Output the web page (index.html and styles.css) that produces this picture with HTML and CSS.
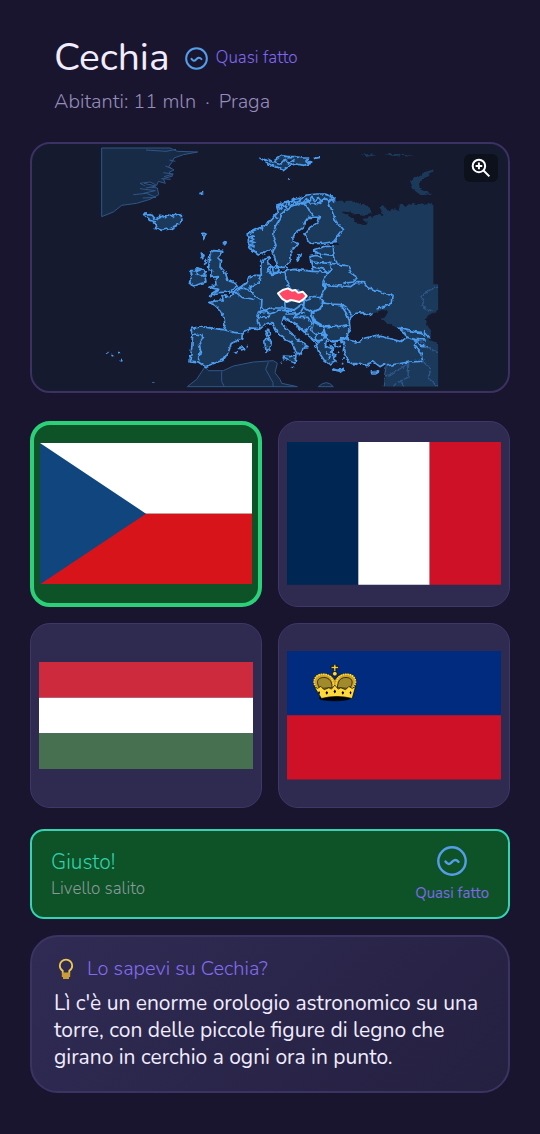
FILE: index.html
```html
<!DOCTYPE html>
<html lang="it">
<head>
    <meta charset="UTF-8">
    <meta name="viewport" content="width=device-width, initial-scale=1.0">
    <title>Cechia</title>
    <link rel="stylesheet" href="styles.css">
</head>
<body>
    <main class="page">
        <header class="country">
            <div class="country-title">
                <h1>Cechia</h1>
                <svg class="level-icon" viewBox="0 0 30 30" aria-hidden="true">
                    <circle cx="15" cy="15" r="13.5"/>
                    <path d="M8.500 15.500c2 3 3.700 3.200 6 .8s4.200-3.400 7-.5"/>
                </svg>
                <span class="level-name">Quasi fatto</span>
            </div>
            <p class="country-facts"><span>Abitanti: 11 mln</span><span>·</span><span>Praga</span></p>
        </header>

        <section class="map-card">
            <svg class="map" viewBox="0 0 1020 729" role="img" aria-label="Europa">
                <defs>
                    <!-- roughens the coastlines and borders -->
                    <filter id="coast" filterUnits="userSpaceOnUse" x="0" y="0" width="1040" height="740" color-interpolation-filters="sRGB">
                        <feTurbulence type="fractalNoise" baseFrequency="0.07" numOctaves="2" seed="4"/>
                        <feDisplacementMap in="SourceGraphic" scale="13" xChannelSelector="R" yChannelSelector="G"/>
                    </filter>
                    <clipPath id="frame">
                        <path d="M0 0H1000V415H1015V722H0Z"/>
                    </clipPath>
                </defs>

                <!-- countries outside the quiz -->
                <g class="far">
                    <path d="M5 6H210L232 16 293 18 250 26 222 36 215 50 206 62 222 72 208 78 218 90 190 98 196 112 175 106 170 118 150 108 120 112 140 122 172 126 176 146 150 160 110 172 65 178 40 198 5 212Z"/>
                    <path d="M138 12l60 4 30-6M132 112l36 8-30 6M100 146l40-4 28 12-40 2M190 80l30 4-28 8M184 98l28 2M196 60l20 8M208 42l18 4M120 128l46 6-36 8"/>
                    <path d="M262 722L290 700 315 662 325 674 370 674 400 660 460 648 520 644 532 652 525 680 540 700 545 712 592 722Z"/>
                    <path d="M365 676v30l8 16M505 648l-8 22 22 40v12"/>
                    <path d="M655 722q25-24 45 0Z"/>
                </g>

                <g clip-path="url(#frame)">
                <g filter="url(#coast)">
                    <!-- land -->
                    <g class="land">
                        <path d="M445 262L485 242 515 222 535 197 530 182 555 167 590 162 620 147 650 144 675 144 700 152 705 164 720 167 765 167 810 187 815 202 790 210 740 197 722 197 755 214 765 232 795 237 800 227 788 220 815 212 830 204 850 207 838 182 852 177 862 194 885 187 895 194 900 177 920 182 935 170 960 177 985 170 1000 177 1030 177V484L1010 496 995 502 973 522 985 542 993 562 990 582 1010 590 1030 620V740H851L857 687 860 652 840 662 820 647 800 659 780 649 765 657 745 647 737 632 730 612 735 592 725 584 700 588 680 584 676 600 700 612 698 632 706 646 690 654 672 642 656 618 648 594 635 578 612 556 580 532 556 518 552 508 545 536 575 562 590 580 624 602 610 604 605 620 595 628 588 616 575 590 550 576 530 556 517 530 502 532 480 548 455 546 430 560 424 578 395 592 385 618 370 642 335 655 315 662 295 648 270 645 275 607 278 567 272 548 305 542 370 551 375 537 372 515 360 492 345 478 328 470 348 462 370 462 365 449 390 452 405 437 415 427 440 412 445 396 465 388 484 388 482 357 490 337 508 332 505 352 515 362 502 376 515 385 560 374 585 370 640 376 634 358 630 332 648 328 665 336 660 322 644 318 638 312 670 302 700 297 720 294 710 286 670 292 632 292 620 285 615 262 630 244 655 227 658 214 625 214 615 227 610 244 585 262 578 277 580 287 595 294 585 307 572 317 573 342 555 364 530 364 525 337 515 317 510 308 495 320 475 327 455 312 445 292Z"/>
                        <path d="M975 78l27-8v8l-30 16-15 20 2 12 38 18-35 4-22-18-10-26z"/>
                        <path d="M782 26l22 6 25-4-24-4zM852 24l30 6 30-2 32 2-30-6z"/>
                    </g>

                    <!-- inland seas -->
                    <path class="sea" d="M768 502L790 500 805 508 820 504 836 496 850 492 865 496 855 514 842 520 862 530 890 545 915 562 918 574 900 586 862 576 830 568 795 576 770 588 745 582 742 566 750 548 748 528 752 514Z"/>

                    <g class="lines">
                        <!-- islands -->
                        <path class="isle" d="M130 205l22-2 14 16 16-8 12 4 14-8 10 4 12-6 14 4 2 14-12 14-20 10-28 6-20-6 6-10-14-4 8-6-14-4z"/>
                        <path class="isle" d="M298 143l12-3M306 262l14 0-6 8-2 8zM370 290l8-4-4 10z"/>
                        <path class="isle" d="M480 36l14 8 12-4 12 8 16-12 10-8 18 4 24 0 20 4 20 0-8 8 14 8-20 6-24-4-18 4-20 16-16-10-20-6zM520 46l24 8 12-14 10 12 18-12M624 46l10 2M640 38l20-4M564 98l6 2"/>
                        <path class="isle" d="M330 322l10-8 28 2-4 10-10 10 8 8-2 18 10 10 8 14 6 18 20 6 8 12-16 12 4 4-50 2-18 12 4-10 20-12-12-2-14-4 18-8-2-16 6-8-18 2 4-18-10-2-2-10z"/>
                        <path class="isle" d="M308 370l10 8-4 8 4 22-20 6-14 6-16-8 6-12-4-10 8-8-6-8 14 0 6-8z"/>
                        <path d="M308 370l-18 4-2 10 14 6 12-4"/>
                        <path class="isle" d="M304 324l8 4-4 10zM314 342l6 8-8 6M372 289l6-4-4 10"/>
                        <path class="isle" d="M502 552l4-2 2 14-6 10-4-10zM494 582l14-4 6 10-4 24-12 4zM550 630l22 2 16-6-2 18-2 8-18-8-16-8z"/>
                        <path class="isle" d="M518 362l12-4 6 8-4 14-12 0zM506 372l8 6M594 328l10-4-4 12-8 6zM558 366l6 2M640 312l6 4-8 2zM644 322l6-4 4 6"/>
                        <path class="isle" d="M404 618l8-2M418 606l10-4 6 6-10 4zM440 602l4 0M696 668l14 4 20-2-10 6-22-4zM814 678l16-2 6 2-10 6-10 0zM726 640l6-2M714 618l6 2M716 600l6 2M726 654l4-2M546 648l2 2M576 662l2 4"/>
                        <path class="isle" d="M18 622l8-2M34 628l6 2M60 642l4 4M160 712l6-2M54 620l4 0"/>

                        <!-- mainland coast -->
                        <path d="M705 164L700 152 675 144 650 144 620 147 590 162 555 167 530 182 535 197 515 222 485 242 445 262 445 292 455 312 475 327 495 320 510 308 515 317 525 337 530 364 555 364 573 342 572 317 585 307 595 294 580 287 578 277 585 262 610 244 615 227 625 214 658 214 655 227 630 244 615 262 620 285 632 292 670 292 710 286"/>
                        <path d="M702 300L670 302 638 312 644 318 660 322 665 336 648 328 630 332 634 358 640 376 585 370 560 374 515 385 502 376 515 362 505 352 508 332 490 337 482 357 484 388 465 388 445 396 440 412 415 427 405 437 390 452 365 449 370 462 348 462 328 470 345 478 360 492 372 515 375 537 370 551 305 542 272 548 278 567 275 607 270 645 295 648 315 662 335 655 370 642 385 618 395 592 424 578 430 560 455 546 480 548 502 532 517 530 530 556 550 576 575 590 588 616 595 628 605 620 610 604 624 602 590 580 575 562 545 536 552 508 556 518 580 532 612 556 635 578 648 594 656 618 672 642 690 654 706 646 698 632 700 612 676 600 680 584 700 588 725 584 735 592 730 612 737 632 745 647 765 657 780 649 800 659 820 647 840 662 860 650"/>
                        <path d="M820 504L805 508 790 500 768 502 752 514 748 528 750 548 742 566 745 582 770 588 795 576 830 568 862 576 900 586 918 574 915 562 895 546"/>

                        <!-- fjords and northern capes -->
                        <path d="M448 262l14 8-14 4 16 6-14 6 18 4-18 6 14 8M485 242l6 12M505 226l-6 14M520 208l12 10M530 182l16 8-4-18 16 12 6-18 8 14 12-14 6 10 12-16 4 14 14-16 4 12 12-16 10 12 8-12 10 12 10-10 10 12 10-12 8 14M528 178l22-8 24-6 14-10"/>

                        <!-- borders -->
                        <path d="M518 322L528 298 520 276 524 244 540 218 548 200 570 184 600 172 616 174 626 190 640 208M600 172L640 170 648 176 668 162 684 164M684 164L692 184 700 206 708 226 728 252 712 272 700 288"/>
                        <path d="M700 302l2 26-38-4M702 328l10 26-24-2-54-4M712 354l20 4M634 362l40 8 10 14M640 376l40 2M692 358l4 14-16 12-12 26M712 354l32 6 10 22 18 12-12 14-30 4M668 410l10 14-18 30 2 8M676 416l54 4 22 2 16-12 22 0 12 14 50 18 24 6-2 24-24 10-20 8"/>
                        <path d="M556 374l2 30 10 18 8 22M484 390l-10 22-24 10 6 20 12 6M415 427l18 0 28 14M424 422l18-16M405 437l22 18 28 4 8 4M462 448l24 14-2 22-8 16-4 26 8 20M472 500l26-4 18-10 40 0-2-16 18-6"/>
                        <path d="M480 484l20 10 8 10 14-4 14-8 20 2 26 2 10 12M480 512l18 4 12-10M556 486l26 6 26-18 4-20M612 462l28-10 28 0M614 462l-4 22 24 14 30-10 8-18-10-10M610 484l-8 14-24 6-22 0M572 434l30-2"/>
                        <path d="M662 470l30 4 30 2 16 24 10 24M722 474l20 14 12 20M672 470l-14 20-24 12M634 500l10 24 30 18 40 0 32-6M614 500l-14 2-24 12M578 514l46 0 10 16-8 18-14 10-30-30M634 502l6 28-6 26M640 528l30 14 8 30-18 12-24-4M670 544l4 28 28 14 28-6 14-12M634 556l12 10 8 22-10 12M646 566l18-8 10 14"/>
                        <path d="M278 564l28 2 2 14-10 14 4 22-6 20 0 10M372 551l30 8 28 4M430 560l10-8M724 592l-2-14 20-2"/>
                        <path d="M895 546l30 8 40 6 14 14M918 574l30 6 30 2M948 580l-6 16 20 24 6 26M968 646l-40 2-40 6-28 6M948 582l14 16 22 2M972 556l18 20"/>
                        <!-- aegean -->
                        <path d="M690 600l12 10-8 8 14 8-10 8 12 10M676 616l14 12-6 12M708 590l-4 10 12 6"/>
                    </g>

                    <path class="far-lines" d="M860 652l-6 36-4 34M854 690l16-4 60-36M926 654l-2 40-34 16-10 12M900 708l12 14M968 646l24 22-6 30 30 24M1015 420l-20 8-20 14-12 10 10 12-8 16 30 16M964 586l20 20 30 14"/>
                </g>
                </g>

                <path class="current" d="M534 442l14-10 16-5 12 7 10-2 8 8 14-3 12 13-10 10-12 8-14-4-12-2-12 5-14-9z"/>
            </svg>
            <button class="zoom-button" type="button" aria-label="Ingrandisci">
                <svg viewBox="0 0 24 24" aria-hidden="true">
                    <circle cx="9.500" cy="9.500" r="7.500"/>
                    <path d="M15 15l7 7M9.500 5.500v8M5.500 9.500h8"/>
                </svg>
            </button>
        </section>

        <section class="flags">
            <button class="flag correct" type="button" aria-label="Cechia">
                <svg viewBox="0 0 6 4">
                    <path fill="#fff" d="M0 0h6v2H0z"/>
                    <path fill="#d7141a" d="M0 2h6v2H0z"/>
                    <path fill="#11457e" d="M0 0l3 2-3 2z"/>
                </svg>
            </button>
            <button class="flag" type="button" aria-label="Francia">
                <svg viewBox="0 0 6 4">
                    <path fill="#002654" d="M0 0h2v4H0z"/>
                    <path fill="#fff" d="M2 0h2v4H2z"/>
                    <path fill="#ce1126" d="M4 0h2v4H4z"/>
                </svg>
            </button>
            <button class="flag" type="button" aria-label="Ungheria">
                <svg viewBox="0 0 6 3">
                    <path fill="#cd2a3e" d="M0 0h6v1H0z"/>
                    <path fill="#fff" d="M0 1h6v1H0z"/>
                    <path fill="#477050" d="M0 2h6v1H0z"/>
                </svg>
            </button>
            <button class="flag" type="button" aria-label="Liechtenstein">
                <svg viewBox="0 0 640 384">
                    <path fill="#002b7f" d="M0 0h640v192H0z"/>
                    <path fill="#ce1126" d="M0 192h640v192H0z"/>
                    <g transform="translate(39 0)" stroke="#000" stroke-width="2">
                        <ellipse cx="104" cy="141" rx="46" ry="8"/>
                        <path fill="#c9a227" d="M54 118C28 88 46 64 76 68c14 2 22 8 28 18 6-10 14-16 28-18 30-4 48 20 22 50z"/>
                        <path fill="#a08a2c" d="M60 112C42 88 58 76 78 80c14 4 18 16 18 30zM148 112c18-24 2-36-18-32-14 4-18 16-18 30z"/>
                        <path fill="none" stroke="#ffd83d" stroke-width="5" stroke-dasharray="5 2" d="M52 114C30 88 48 66 76 70c16 2 24 16 24 38M156 114c22-26 4-48-24-44-16 2-24 16-24 38"/>
                        <path fill="#ffd83d" d="M101 40h6v6h8v6h-8v10h-6V52h-8v-6h8z"/>
                        <circle cx="104" cy="68" r="7" fill="#ffd83d"/>
                        <path fill="#ffd83d" d="M42 106l10 6 10-6 10 10 14-6 8 4 10-12 10 12 8-4 14 6 10-10 10 6 10-6-10 36q-46-12-92 0z"/>
                        <path stroke="none" d="M57 120l3 5-3 5-3-5zM80 120l4 5-4 6-4-6zM104 115l4 6-4 6-4-6zM128 120l4 5-4 6-4-6zM151 120l3 5-3 5-3-5z"/>
                    </g>
                </svg>
            </button>
        </section>

        <section class="result">
            <div class="result-text">
                <strong>Giusto!</strong>
                <span>Livello salito</span>
            </div>
            <div class="result-level">
                <svg class="level-icon" viewBox="0 0 30 30" aria-hidden="true">
                    <circle cx="15" cy="15" r="13.700"/>
                    <path d="M8.500 15.500c2 3 3.700 3.200 6 .8s4.200-3.400 7-.5"/>
                </svg>
                <span class="level-name">Quasi fatto</span>
            </div>
        </section>

        <section class="trivia">
            <h2>
                <svg viewBox="0 0 24 24" aria-hidden="true">
                    <path fill="none" stroke="#f0c850" stroke-width="1.800" d="M8.700 16v-2.200C6.800 12.700 5.800 11 5.800 8.800a6.200 6.200 0 0 1 12.400 0c0 2.200-1 3.900-2.900 5V16"/>
                    <path fill="#c99d35" d="M7.800 15.500h8.400v4.500h-1.200v2H9v-2H7.800z"/>
                </svg>
                Lo sapevi su Cechia?
            </h2>
            <p>Lì c'è un enorme orologio astronomico su una torre, con delle piccole figure di legno che girano in cerchio a ogni ora in punto.</p>
        </section>
    </main>
</body>
</html>
```
FILE: styles.css
```css
* {
    box-sizing: border-box;
}

body {
    margin: 0;
    background: #19152f;
    color: #f1ecff;
    font-family: "Nunito", "Open Sans", sans-serif;
    font-size: 20px;
    font-weight: 300;
}

h1, h2, p {
    margin: 0;
    font-weight: 300;
}

svg {
    display: block;
}

button {
    border: none;
    cursor: pointer;
}

.page {
    padding: 32px 30px 40px;
}

/* header */
.country {
    padding: 0 24px;
    margin-bottom: 26px;
}

.country-title {
    display: flex;
    align-items: center;
    gap: 8px;
}

.country-title h1 {
    margin-right: 7px;
    font-size: 39px;
    font-weight: 400;
    line-height: 52px;
}

.level-icon {
    width: 23px;
    height: 23px;
    fill: none;
    stroke: #549ee9;
    stroke-width: 2.6;
    stroke-linecap: round;
}

.level-name {
    color: #7f69ea;
    font-size: 17px;
    line-height: 20px;
}

.country-facts {
    display: flex;
    gap: 9px;
    margin-top: 4px;
    color: #968dba;
    font-size: 20px;
    line-height: 28px;
}

/* map */
.map-card {
    position: relative;
    padding: 2px 68px;
    margin-bottom: 28px;
    border: 2px solid #3b3162;
    border-radius: 20px;
    background: #151a2e;
}

.map {
    width: 100%;
}

.far {
    fill: #182b46;
    stroke: #2f5688;
    stroke-width: 3;
}

.far-lines {
    fill: none;
    stroke: #2f5688;
    stroke-width: 4;
}

.land {
    fill: #1b3a5b;
}

.sea {
    fill: #151a2e;
}

.lines {
    fill: none;
    stroke: #4c9cf0;
    stroke-width: 5;
    stroke-linejoin: round;
}

.isle {
    fill: #1b3a5b;
}

.current {
    fill: #ff4766;
    stroke: #fff;
    stroke-width: 6;
    stroke-linejoin: round;
}

.zoom-button {
    position: absolute;
    top: 10px;
    right: 10px;
    padding: 4px 7px;
    border-radius: 6px;
    background: #0c111c;
}

.zoom-button svg {
    width: 20px;
    height: 20px;
    fill: none;
    stroke: #fff;
    stroke-width: 2.4;
}

/* answers */
.flags {
    display: grid;
    grid-template-columns: 1fr 1fr;
    gap: 16px;
    margin-bottom: 21px;
}

.flag {
    display: flex;
    align-items: center;
    aspect-ratio: 5 / 4;
    padding: 8px;
    border: 1px solid #3f3768;
    border-radius: 20px;
    background: #2f2a50;
}

.flag svg {
    width: 100%;
}

.flag.correct {
    padding: 6px;
    border: 4px solid #2bd079;
    background: #0e5227;
}

.result {
    display: flex;
    justify-content: space-between;
    align-items: center;
    padding: 15px 19px 14px;
    margin-bottom: 16px;
    border: 2px solid #35d3b4;
    border-radius: 14px;
    background: #0e5227;
}

.result-text {
    display: flex;
    flex-direction: column;
    color: #8a9a9c;
    font-size: 17px;
    line-height: 26px;
}

.result-text strong {
    color: #2fd3ae;
    font-size: 21px;
    font-weight: 300;
    line-height: 28px;
}

.result-level {
    display: flex;
    flex-direction: column;
    align-items: center;
    gap: 7px;
}

.result-level .level-icon {
    width: 30px;
    height: 30px;
    stroke-width: 2.4;
}

.result-level .level-name {
    font-size: 15px;
    font-weight: 400;
}

/* fun fact */
.trivia {
    padding: 18px 22px 20px;
    border: 2px solid #3b3462;
    border-radius: 28px;
    background: linear-gradient(135deg, #302b54, #242040);
}

.trivia h2 {
    display: flex;
    align-items: center;
    gap: 9px;
    margin-bottom: 8px;
    color: #826cee;
    font-size: 20px;
    line-height: 27px;
}

.trivia h2 svg {
    width: 24px;
    height: 24px;
}

.trivia p {
    font-size: 21px;
    font-weight: 400;
    line-height: 27px;
}
```
